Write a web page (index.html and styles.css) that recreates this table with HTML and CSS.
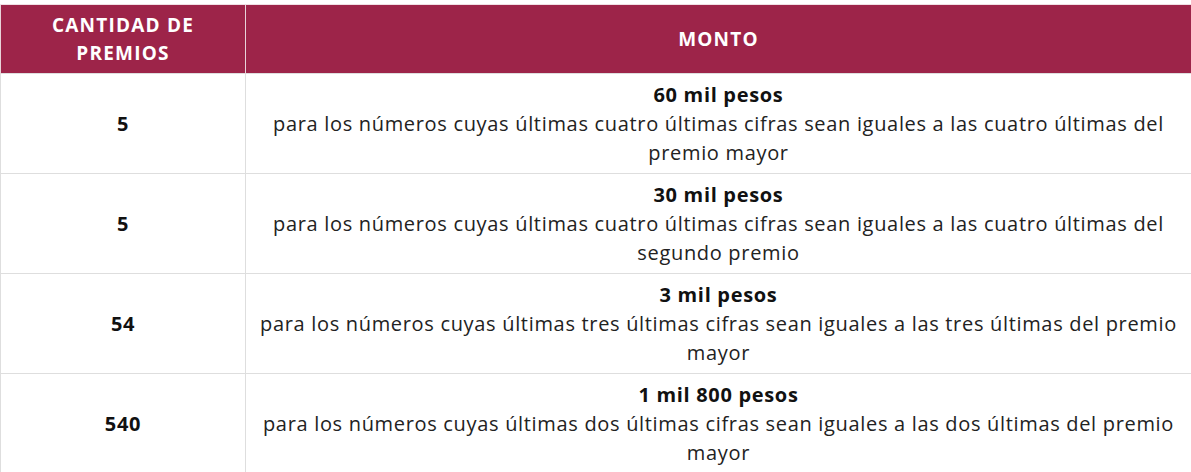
FILE: index.html
```html
<!DOCTYPE html>
<html lang="es">
<head>
<meta charset="utf-8">
<title>Premios</title>
<link rel="stylesheet" href="styles.css">
</head>
<body>
<div class="wrap">
<table class="prizes">
  <thead>
    <tr>
      <th class="col-qty">CANTIDAD DE PREMIOS</th>
      <th class="col-amount">MONTO</th>
    </tr>
  </thead>
  <tbody>
    <tr>
      <td class="qty">5</td>
      <td class="amount"><strong>60 mil pesos</strong><br>para los números cuyas últimas cuatro últimas cifras sean iguales a las cuatro últimas del premio mayor</td>
    </tr>
    <tr>
      <td class="qty">5</td>
      <td class="amount"><strong>30 mil pesos</strong><br>para los números cuyas últimas cuatro últimas cifras sean iguales a las cuatro últimas del segundo premio</td>
    </tr>
    <tr>
      <td class="qty">54</td>
      <td class="amount"><strong>3 mil pesos</strong><br>para los números cuyas últimas tres últimas cifras sean iguales a las tres últimas del premio mayor</td>
    </tr>
    <tr>
      <td class="qty">540</td>
      <td class="amount"><strong>1 mil 800 pesos</strong><br>para los números cuyas últimas dos últimas cifras sean iguales a las dos últimas del premio mayor</td>
    </tr>
  </tbody>
</table>
</div>
</body>
</html>
```
FILE: styles.css
```css
html, body {
  margin: 0;
  padding: 0;
  background: #ffffff;
}
.wrap {
  margin-top: 4px;
  border-top: 1px solid #f0dfe4;
}
.prizes {
  width: 1192px;
  border-collapse: collapse;
  font-family: "Open Sans", "Noto Sans", sans-serif;
  color: #222222;
}
.prizes th {
  background: #9d2449;
  color: #ffffff;
  font-weight: 700;
  font-size: 19px;
  letter-spacing: 1.2px;
  line-height: 28px;
  height: 68px;
  padding: 0 14px;
  text-align: center;
  border-left: 1px solid #e8d3d9;
  border-right: 1px solid #e8d3d9;
}
.prizes .col-qty { width: 216px; }
.prizes td {
  border: 1px solid #dedede;
  text-align: center;
  vertical-align: middle;
  font-size: 20px;
  letter-spacing: 0.68px;
  line-height: 29px;
  padding: 6px 5px 6px;
  height: 87px;
}
.prizes td.qty {
  font-weight: 700;
  color: #111111;
}
.prizes td.amount strong {
  font-weight: 700;
  color: #111111;
}
```
